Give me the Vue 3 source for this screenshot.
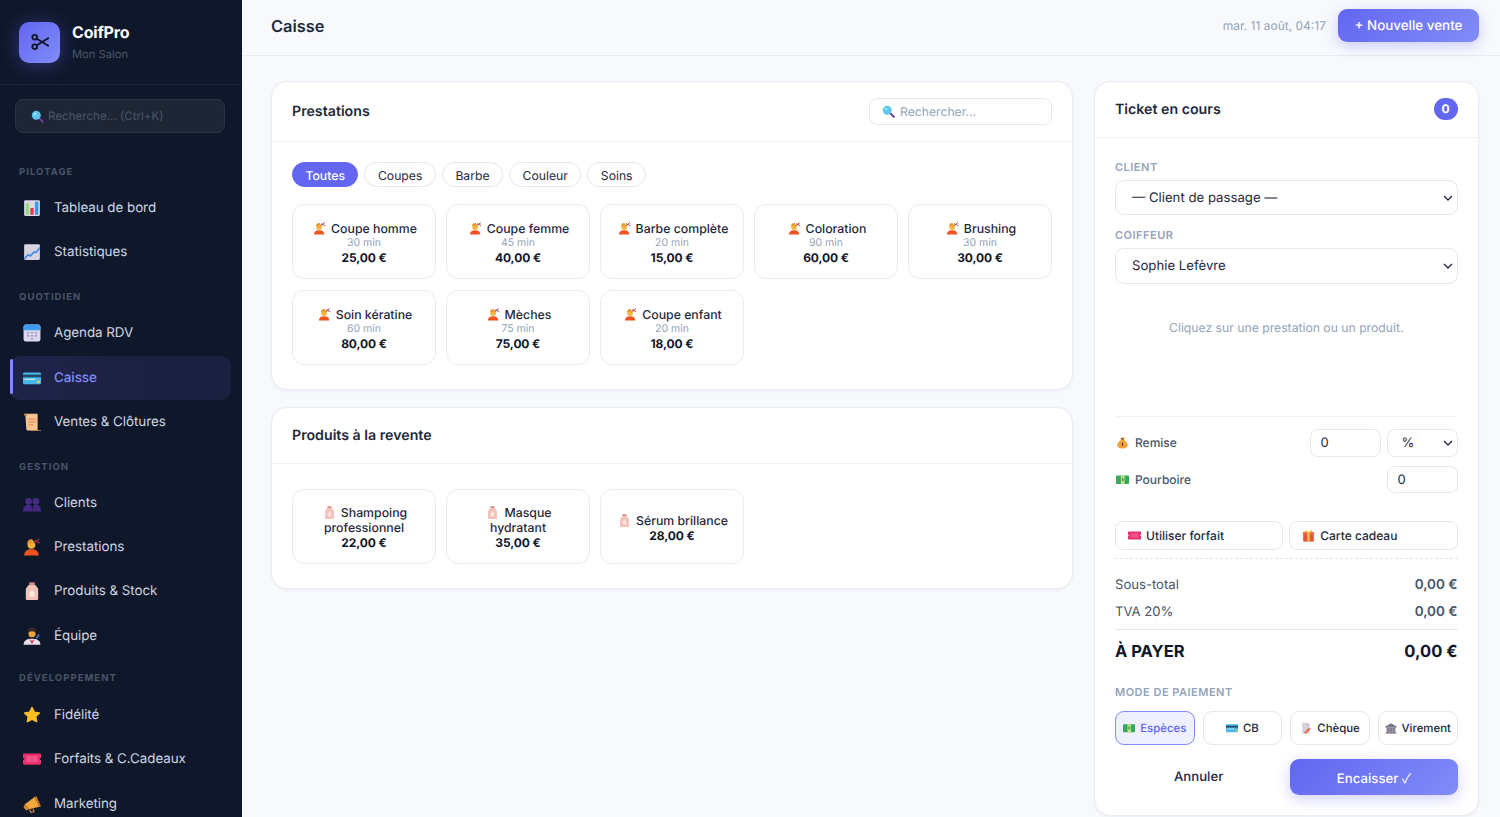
<script setup>
import { h } from 'vue'

const ICONS = {
  chart: '<rect x="1" y="1" width="14" height="14" rx="1" fill="#dcd8e6"/><rect x="2.4" y="4" width="3" height="10" fill="#8edc7c"/><rect x="6.5" y="8" width="3" height="6" fill="#e8365d"/><rect x="10.6" y="2.4" width="3" height="11.6" fill="#3a9be8"/>',
  stats: '<rect x="1" y="1" width="14" height="14" rx="1" fill="#d8d3e3"/><path d="M1 14.5 4.5 10.5 6.5 11.5 10 8 11.5 8.5 15 4" fill="none" stroke="#3f8ee6" stroke-width="1.5"/>',
  cal: '<rect x="0.5" y="0.5" width="15" height="15" rx="2" fill="#dcd8f0"/><path d="M.5 5.500v-3a2 2 0 0 1 2-2h11a2 2 0 0 1 2 2v3z" fill="#3f9bf0"/><g fill="#a19ac9"><rect x="3.500" y="7" width="2" height="1.500"/><rect x="7" y="7" width="2" height="1.500"/><rect x="10.500" y="7" width="2" height="1.500"/><rect x="3.500" y="9.700" width="2" height="1.500"/><rect x="7" y="9.700" width="2" height="1.500"/><rect x="10.500" y="9.700" width="2" height="1.500"/><rect x="7" y="12.300" width="2" height="1.500"/></g>',
  card: '<rect x="0" y="3" width="16" height="10.500" rx="1" fill="#48b9ea"/><rect x="0" y="5" width="16" height="2.400" fill="#1e4a66"/><rect x="1.500" y="8.600" width="9.500" height="1.200" fill="#bfe8f8"/><rect x="12.500" y="10.400" width="2.500" height="2" fill="#f5c542"/>',
  scroll: '<path d="M2 .7h11v13.800a1 1 0 0 0 1 1H4a1 1 0 0 1-1-1z" fill="#f6c48e"/><path d="M.8.7h3.200v1.500H.8zM7 15h9v.7H7z" fill="#cf8a4a"/><g fill="#e98a4c"><rect x="5" y="5" width="6" height="1"/><rect x="5" y="7.500" width="6" height="1"/><rect x="5" y="10" width="4" height="1"/></g>',
  people: '<g fill="#452a84"><circle cx="5" cy="6.500" r="3"/><circle cx="11.500" cy="6.500" r="3"/><path d="M0 15.500c0-4 2.200-6 5-6s3 2 3 6z"/><path d="M8.300 15.500c0-4 .5-6 3.200-6s4.500 2 4.500 6z"/></g>',
  person: '<path d="M1 15.500c.2-3.800 2.600-5.500 6.500-5.500s6.300 1.700 6.500 5.500z" fill="#f0531e"/><circle cx="7.500" cy="6" r="3.500" fill="#f5b53c"/><path d="M3.800 5c0-3 2.200-4.200 4.500-3.800L9 3 7 5z" fill="#e59a2a"/><path d="M9.500 4.500 14.500.8M10 2l5 2.600" stroke="#a1304a" stroke-width="1.100"/>',
  bottle: '<rect x="5.500" y="0.300" width="5" height="2.200" fill="#d98a85"/><path d="M5.200 2.400h5.600L13.500 6v9a1 1 0 0 1-1 1h-9a1 1 0 0 1-1-1V6z" fill="#f2c3ba"/><path d="M8 6.500c1.800 2.400 2.400 3.300 2.400 4.400a2.400 2.400 0 0 1-4.800 0c0-1.100.6-2 2.400-4.400z" fill="#fbe6e2"/>',
  artist: '<path d="M.5 15.800c.2-3.700 2.600-5.300 7.500-5.300s7.300 1.600 7.500 5.300z" fill="#e6dfe8"/><circle cx="8" cy="6" r="3.200" fill="#eda53a"/><path d="M4.300 5.500C4.200 1.500 6 .5 8 .5s3.800 1 3.700 5L10 4H6z" fill="#3a2a24"/><path d="m5.500 10.500 2.500 2 2.500-2L8 15z" fill="#d7263d"/><path d="m12 10 2.300-3.500" stroke="#4b7bd4" stroke-width="1.400"/>',
  star: '<path d="M8 1.500l2 4.100 4.500.6-3.300 3.100.8 4.500-4-2.200-4 2.200.8-4.500-3.300-3.100 4.500-.6z" fill="#fbbf24" stroke="#fbbf24" stroke-width="1.500" stroke-linejoin="round"/>',
  ticket: '<path d="M1 3h14a1 1 0 0 1 1 1v3a1 1 0 0 0 0 2v3a1 1 0 0 1-1 1H1a1 1 0 0 1-1-1V9a1 1 0 0 0 0-2V4a1 1 0 0 1 1-1z" fill="#e92d66"/><rect x="3" y="5" width="10" height="6" fill="#f0508a"/>',
  mega: '<path d="M1.500 8.500 10.500 1.500l4 9-9 2.200z" fill="#f3a63b"/><path d="M10.500 1.500 14.500 10.700l1.500-.7L12 1z" fill="#c9781f"/><path d="M1.500 8.500 5.500 12.700l-2.500 1-2.500-2.700z" fill="#d98b2b"/><path d="M6 13 7 15.500l2.800-.8-.8-2.500" fill="none" stroke="#b47a3a" stroke-width="1.200"/>',
  lens: '<path d="m9.500 9.500 5 5" stroke="#6b3f96" stroke-width="2.400" stroke-linecap="round"/><circle cx="6.500" cy="6.500" r="5.500" fill="#5cc6ee"/><circle cx="5" cy="5" r="1.700" fill="#a7e6fb"/>',
  bag: '<path d="M5.500 2.200h5L9.500 5h-3z" fill="#b85f22"/><path d="M6.200 5h3.600C13 7 14.500 9.200 14.500 11.500c0 2.500-2.200 3.800-6.500 3.800s-6.500-1.300-6.500-3.800C1.500 9.200 3 7 6.200 5z" fill="#f2a33c"/><rect x="7.200" y="8" width="1.600" height="4.500" fill="#6b3f1a"/>',
  cash: '<rect x="0" y="3" width="16" height="10.500" rx="1" fill="#37a85d"/><rect x="6" y="3" width="4.500" height="10.500" fill="#c6e28a"/><rect x="7.500" y="6" width="1.500" height="4" fill="#2b7f47"/>',
  gift: '<rect x="1.500" y="4.500" width="13" height="11" fill="#e8503f"/><rect x="1" y="3.800" width="14" height="3" fill="#f0694f"/><rect x="6.500" y="3.800" width="3" height="11.700" fill="#f6c23d"/><path d="M8 4 4.500.8 3.300 3.800zM8 4l3.500-3.200 1.200 3z" fill="#f6c23d"/>',
  memo: '<path d="M3 1h7l3 3v11.500H3z" fill="#d8cfdd"/><path d="M10 1v3h3z" fill="#b7abc0"/><path d="m5.500 14 6.500-6.500 2 2L7.500 15.500z" fill="#f0653a"/>',
  bank: '<path d="M8 1.500 15.500 6v1.500H.5V6z" fill="#7e7787"/><rect x="2" y="7.500" width="12" height="6" fill="#a29caa"/><g fill="#6d6676"><rect x="3.500" y="8" width="1.500" height="5"/><rect x="7.200" y="8" width="1.500" height="5"/><rect x="11" y="8" width="1.500" height="5"/></g><rect x="1" y="13.500" width="14" height="2" fill="#7e7787"/>'
}
const Ico = (p) => h('svg', { viewBox: '0 0 16 16', innerHTML: ICONS[p.n] })

const groups = [
  { title: 'PILOTAGE', items: [{ i: 'chart', t: 'Tableau de bord' }, { i: 'stats', t: 'Statistiques' }] },
  { title: 'QUOTIDIEN', items: [{ i: 'cal', t: 'Agenda RDV' }, { i: 'card', t: 'Caisse', active: true }, { i: 'scroll', t: 'Ventes & Clôtures' }] },
  { title: 'GESTION', items: [{ i: 'people', t: 'Clients' }, { i: 'person', t: 'Prestations' }, { i: 'bottle', t: 'Produits & Stock' }, { i: 'artist', t: 'Équipe' }] },
  { title: 'DÉVELOPPEMENT', items: [{ i: 'star', t: 'Fidélité' }, { i: 'ticket', t: 'Forfaits & C.Cadeaux' }, { i: 'mega', t: 'Marketing' }] }
]
const tabs = ['Toutes', 'Coupes', 'Barbe', 'Couleur', 'Soins']
const services = [
  ['Coupe homme', '30 min', '25,00 €'], ['Coupe femme', '45 min', '40,00 €'], ['Barbe complète', '20 min', '15,00 €'],
  ['Coloration', '90 min', '60,00 €'], ['Brushing', '30 min', '30,00 €'], ['Soin kératine', '60 min', '80,00 €'],
  ['Mèches', '75 min', '75,00 €'], ['Coupe enfant', '20 min', '18,00 €']
]
const products = [['Shampoing professionnel', '22,00 €'], ['Masque hydratant', '35,00 €'], ['Sérum brillance', '28,00 €']]
const payments = [['cash', 'Espèces', true], ['card', 'CB'], ['memo', 'Chèque'], ['bank', 'Virement']]
</script>

<template>
  <div class="app">
    <aside class="sidebar">
      <div class="brand">
        <div class="logo">
          <svg viewBox="0 0 16 16" fill="none" stroke="#0f172a" stroke-width="1.700">
            <circle cx="3.300" cy="3.800" r="2.100"/><circle cx="3.300" cy="12.200" r="2.100"/>
            <path d="M5.200 5.100 15.300 11.300M5.200 10.900 15.300 4.700" stroke-linecap="round"/>
          </svg>
        </div>
        <div>
          <div class="brand-name">CoifPro</div>
          <div class="brand-sub">Mon Salon</div>
        </div>
      </div>
      <div class="side-search-wrap">
        <div class="side-search"><Ico n="lens" class="ss-icon" /> Recherche... (Ctrl+K)</div>
      </div>
      <nav class="nav">
        <section v-for="g in groups" :key="g.title" class="nav-group">
          <div class="nav-title">{{ g.title }}</div>
          <a v-for="it in g.items" :key="it.t" class="nav-item" :class="{ active: it.active }">
            <Ico :n="it.i" class="nav-icon" />
            <span>{{ it.t }}</span>
          </a>
        </section>
      </nav>
    </aside>

    <main class="main">
      <header class="topbar">
        <h1>Caisse</h1>
        <div class="top-right">
          <span class="date">mar. 11 août, 04:17</span>
          <button class="primary new-sale">+ Nouvelle vente</button>
        </div>
      </header>

      <div class="content">
        <div class="left">
          <section class="card">
            <div class="card-head services-head">
              <h2>Prestations</h2>
              <div class="search"><Ico n="lens" class="search-ic" /><span>Rechercher...</span></div>
            </div>
            <div class="card-body">
              <div class="tabs">
                <button v-for="(t, n) in tabs" :key="t" class="tab" :class="{ on: n === 0 }">{{ t }}</button>
              </div>
              <div class="grid">
                <div v-for="s in services" :key="s[0]" class="tile">
                  <div class="tile-name"><Ico n="person" class="tile-ic" />{{ s[0] }}</div>
                  <div class="tile-min">{{ s[1] }}</div>
                  <div class="tile-price">{{ s[2] }}</div>
                </div>
              </div>
            </div>
          </section>

          <section class="card">
            <div class="card-head products-head"><h2>Produits à la revente</h2></div>
            <div class="card-body products-body">
              <div class="grid">
                <div v-for="p in products" :key="p[0]" class="tile">
                  <div class="tile-name"><Ico n="bottle" class="tile-ic" />{{ p[0] }}</div>
                  <div class="tile-price">{{ p[1] }}</div>
                </div>
              </div>
            </div>
          </section>
        </div>

        <aside class="ticket">
          <div class="ticket-head">
            <h2>Ticket en cours</h2>
            <span class="badge">0</span>
          </div>
          <div class="ticket-body">
            <label class="field-label">CLIENT</label>
            <select class="sel client"><option>— Client de passage —</option></select>
            <label class="field-label second">COIFFEUR</label>
            <select class="sel coif"><option>Sophie Lefèvre</option></select>
            <div class="hint">Cliquez sur une prestation ou un produit.</div>

            <div class="adjust">
              <div class="adj-row first">
                <span class="adj-label"><Ico n="bag" class="adj-ic" />Remise</span>
                <div class="adj-ctrl">
                  <input class="num" value="0" />
                  <select class="unit"><option>%</option></select>
                </div>
              </div>
              <div class="adj-row second-row">
                <span class="adj-label"><Ico n="cash" class="adj-ic" />Pourboire</span>
                <input class="num tip" value="0" />
              </div>
            </div>

            <div class="two">
              <button class="ghost"><Ico n="ticket" class="g-ic" />Utiliser forfait</button>
              <button class="ghost"><Ico n="gift" class="g-ic" />Carte cadeau</button>
            </div>

            <div class="totals">
              <div class="t-row"><span>Sous-total</span><b>0,00 €</b></div>
              <div class="t-row"><span>TVA 20%</span><b>0,00 €</b></div>
              <div class="t-grand"><span>À PAYER</span><span>0,00 €</span></div>
            </div>

            <div class="field-label pay-title">MODE DE PAIEMENT</div>
            <div class="pays">
              <button v-for="p in payments" :key="p[1]" class="pay" :class="{ on: p[2] }"><Ico :n="p[0]" class="p-ic" />{{ p[1] }}</button>
            </div>

            <div class="actions">
              <button class="cancel">Annuler</button>
              <button class="primary pay-btn">Encaisser <span class="check">✓</span></button>
            </div>
          </div>
        </aside>
      </div>
    </main>
  </div>
</template>

<style>
html, body { margin: 0; height: 100%; overflow: hidden; }
</style>

<style scoped>
* { box-sizing: border-box; }
.app { display: flex; height: 817px; overflow: hidden; font-family: Inter, "Noto Sans", sans-serif; background: #f8f9fd; color: #1e293b; text-rendering: geometricPrecision; }
button, input, select { font-family: inherit; text-rendering: geometricPrecision; }
svg { display: block; flex: none; }

.sidebar { width: 242px; flex: none; background: #0f172a; overflow: hidden; }
.brand { height: 85px; display: flex; align-items: center; gap: 12px; padding: 0 19px; border-bottom: 1px solid #1a2436; }
.logo { width: 41px; height: 41px; border-radius: 10px; background: linear-gradient(135deg, #6366f1, #818cf8); box-shadow: 0 2px 20px rgba(99,102,241,.4); display: flex; align-items: center; justify-content: center; }
.logo svg { width: 18px; height: 18px; }
.brand-name { font-size: 16px; font-weight: 700; color: #fff; line-height: 22px; letter-spacing: -.2px; }
.brand-sub { font-size: 11.2px; color: #475569; line-height: 18px; margin-top: 2px; }
.side-search-wrap { padding: 14px 17px 0 15px; }
.side-search { height: 34px; border: 1px solid #283347; background: #1e2535; border-radius: 8px; color: #475569; font-size: 11.6px; display: flex; align-items: center; padding-left: 15px; gap: 4px; }
.ss-icon { width: 13px; height: 13px; }
.nav { padding: 0 11px 0 10px; }
.nav-title { font-size: 9.5px; font-weight: 700; letter-spacing: 1.05px; color: #475569; padding-left: 9px; line-height: 12px; }
.nav-group:nth-child(1) .nav-title { margin-top: 34px; margin-bottom: 7px; }
.nav-group:nth-child(2) .nav-title { margin-top: 18px; margin-bottom: 7px; }
.nav-group:nth-child(3) .nav-title { margin-top: 18px; margin-bottom: 7px; }
.nav-group:nth-child(4) .nav-title { margin-top: 15.500px; margin-bottom: 8px; }
.nav-item { height: 44.2px; display: flex; align-items: center; padding-left: 13px; gap: 13px; color: #cbd5e1; font-size: 13.4px; letter-spacing: -.05px; border-radius: 10px; position: relative; }
.nav-icon { width: 18px; height: 18px; }
.nav-item.active { background: linear-gradient(90deg, #1e2348, #1b2040); color: #818cf8; font-weight: 500; }
.nav-item.active::before { content: ""; position: absolute; left: 0; top: 3px; bottom: 6px; width: 3px; background: #818cf8; border-radius: 2px; }

.main { flex: 1; min-width: 0; display: flex; flex-direction: column; }
.topbar { height: 56px; border-bottom: 1px solid #e8ebf1; display: flex; align-items: center; justify-content: space-between; padding: 0 21px 4px 29px; flex: none; }
h1 { margin: 0; font-size: 16.4px; font-weight: 600; color: #1e293b; }
.top-right { display: flex; align-items: center; gap: 12px; }
.date { font-size: 12px; color: #94a3b8; }
.primary { border: none; color: #fff; background: linear-gradient(135deg, #6366f1, #818cf8); border-radius: 9px; box-shadow: 0 4px 14px rgba(99,102,241,.3); font-weight: 500; font-size: 13.4px; }
.new-sale { width: 141px; height: 33.500px; }

.content { flex: 1; min-height: 0; display: flex; gap: 21px; padding: 25px 21px 0 29px; }
.left { width: 802px; flex: none; display: flex; flex-direction: column; gap: 17px; }
.card { background: #fff; border: 1px solid #e8ecf4; border-radius: 16px; box-shadow: 0 1px 3px rgba(15,23,42,.05); }
.card-head { display: flex; align-items: center; justify-content: space-between; padding: 0 20px; border-bottom: 1px solid #f1f3f8; }
.services-head { height: 60px; }
.products-head { height: 56px; }
h2 { margin: 0; font-size: 14.2px; font-weight: 600; color: #1e293b; }
.search { width: 183px; height: 27px; border: 1px solid #e2e8f0; border-radius: 8px; font-size: 12.2px; color: #94a3b8; display: flex; align-items: center; padding-left: 12px; gap: 5px; }
.search-ic { width: 13px; height: 13px; }
.card-body { padding: 20px 20px 24px; }
.products-body { padding-top: 25px; }
.tabs { display: flex; gap: 6px; margin-bottom: 17px; }
.tab { height: 25px; padding: 1px 12.500px 0; border-radius: 13px; border: 1px solid #e2e8f0; background: #fff; font-size: 12.2px; color: #1e293b; }
.tab.on { background: #6366f1; border-color: #6366f1; color: #fff; font-weight: 500; }
.grid { display: grid; grid-template-columns: repeat(5, 144px); gap: 11px 10px; }
.tile { height: 75px; border: 1px solid #e8ecf4; border-radius: 12px; display: flex; flex-direction: column; align-items: center; justify-content: center; text-align: center; padding: 2px 12px 0; }
.tile-name { font-size: 12.3px; line-height: 15px; color: #1e293b; font-weight: 500; }
.tile-ic { display: inline-block; width: 13px; height: 13px; margin: 0 5px 0 2px; vertical-align: -2px; }
.tile-min { font-size: 10.5px; line-height: 14px; color: #94a3b8; }
.tile-price { font-size: 12px; line-height: 15px; font-weight: 700; letter-spacing: -.1px; color: #0f172a; }

.ticket { width: 384.500px; flex: none; height: 735px; background: #fff; border: 1px solid #e8ecf4; border-radius: 16px; box-shadow: 0 1px 3px rgba(15,23,42,.05); display: flex; flex-direction: column; }
.ticket-head { height: 56px; display: flex; justify-content: space-between; align-items: center; padding: 0 20px; border-bottom: 1px solid #f1f3f8; flex: none; }
.badge { width: 24px; height: 22px; border-radius: 11px; background: #6366f1; color: #fff; font-size: 12px; font-weight: 700; display: flex; align-items: center; justify-content: center; margin-top: -2px; }
.ticket-body { padding: 22px 20px 0; flex: 1; display: flex; flex-direction: column; }
.field-label { display: block; font-size: 11px; font-weight: 600; letter-spacing: .5px; color: #94a3b8; line-height: 14px; }
.second { margin-top: 13px; }
.sel, .unit { appearance: none; background: #fff url("data:image/svg+xml,%3Csvg xmlns='http://www.w3.org/2000/svg' width='10' height='6'%3E%3Cpath d='M1 1l4 4 4-4' fill='none' stroke='%231e293b' stroke-width='1.300'/%3E%3C/svg%3E") no-repeat right 4px center; }
.sel { width: 100%; border: 1px solid #e2e8f0; border-radius: 9px; font-size: 13.200px; color: #1e293b; padding: 0 16px; margin-top: 6px; flex: none; }
.client { height: 35px; }
.coif { height: 36px; }
.hint { height: 133px; flex: none; text-align: center; padding-top: 36px; font-size: 12.2px; color: #94a3b8; border-bottom: 1px solid #f1f3f8; }
.adjust { padding-top: 12px; }
.adj-row { display: flex; justify-content: space-between; align-items: center; height: 28px; }
.adj-row.first { margin-bottom: 9px; }
.adj-row.second-row { height: 27px; }
.adj-label { font-size: 12px; color: #475569; font-weight: 500; margin-top: -1px; }
.adj-ic { display: inline-block; width: 13px; height: 13px; margin: 0 6px 0 1px; vertical-align: -2px; }
.adj-ctrl { display: flex; gap: 6px; }
.num { width: 71px; height: 28px; border: 1px solid #e2e8f0; border-radius: 8px; padding: 0 10px; font-size: 13px; color: #1e293b; background: #fff; outline: none; }
.tip { height: 27px; }
.unit { width: 71px; height: 28px; border: 1px solid #e2e8f0; border-radius: 8px; padding: 0 14px; font-size: 13px; color: #1e293b; }
.two { display: grid; grid-template-columns: 1fr 1fr; gap: 6px; margin-top: 28px; padding-bottom: 8px; border-bottom: 1px dashed #e2e8f0; }
.ghost { height: 29px; border: 1px solid #e2e8f0; background: #fff; border-radius: 8px; font-size: 12px; color: #1e293b; font-weight: 500; text-align: left; padding: 0 12px; }
.g-ic { display: inline-block; width: 13px; height: 13px; margin-right: 5px; vertical-align: -2px; }
.totals { padding-top: 12px; }
.t-row { display: flex; justify-content: space-between; font-size: 13.100px; color: #475569; height: 27px; align-items: center; }
.t-row b { font-weight: 600; font-size: 13.500px; }
.t-grand { display: flex; justify-content: space-between; align-items: center; height: 42px; border-top: 1px solid #e2e8f0; margin-top: 4px; font-size: 16.500px; font-weight: 700; color: #0f172a; }
.pay-title { margin-top: 14px; }
.pays { display: grid; grid-template-columns: repeat(4, 1fr); gap: 8px; margin-top: 12px; }
.pay { height: 34px; border: 1px solid #e2e8f0; background: #fff; border-radius: 9px; font-size: 11.400px; color: #1e293b; font-weight: 500; padding: 0; white-space: nowrap; }
.pay.on { background: #eef0fe; border-color: #818cf8; color: #6366f1; }
.p-ic { display: inline-block; width: 12px; height: 12px; margin-right: 5px; vertical-align: -2px; }
.actions { display: grid; grid-template-columns: 1fr 1fr; gap: 8px; margin-top: 14px; }
.cancel { height: 36px; border: none; background: none; font-size: 13.200px; font-weight: 500; color: #1e293b; }
.pay-btn { height: 36px; font-size: 13.200px; }
.check { font-family: "Noto Sans CJK JP", "DejaVu Sans", sans-serif; font-weight: 400; }
</style>
